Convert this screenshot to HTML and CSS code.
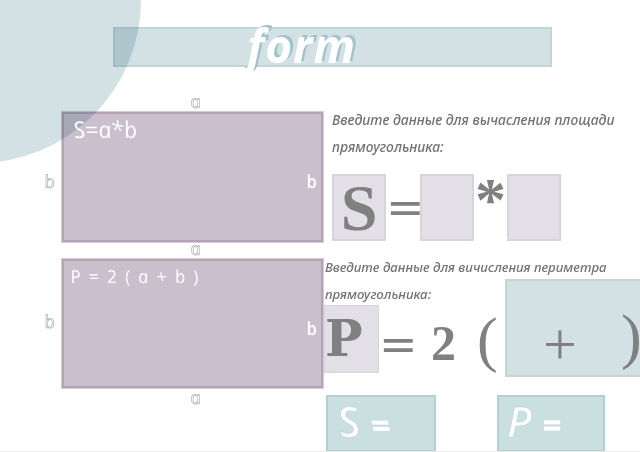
FILE: index.html
```html
<!DOCTYPE html>
<html lang="ru">
<head>
<meta charset="utf-8">
<title>form</title>
<link rel="stylesheet" href="styles.css">
</head>
<body>
<div class="page">
  <div class="circle"></div>
  <header class="banner"><h1 class="title">form</h1></header>
  <main class="main">
    <section class="figures">
      <div class="side-h side-top"><span class="upright">a</span></div>
      <div class="figure">
        <div class="side-left side-left-1"><span class="upright">b</span></div>
        <div class="rect">
          <div class="formula"><span class="upright">S=a*b</span></div>
          <div class="side-right"><span class="upright">b</span></div>
        </div>
      </div>
      <div class="side-h side-mid"><span class="upright">a</span></div>
      <div class="figure">
        <div class="side-left side-left-2"><span class="upright">b</span></div>
        <div class="rect rect-2">
          <div class="formula formula-wide"><span class="upright">P = 2 ( a + b )</span></div>
          <div class="side-right"><span class="upright">b</span></div>
        </div>
      </div>
      <div class="side-h side-bottom"><span class="upright">a</span></div>
    </section>
    <section class="forms">
      <div class="form-area">
        <p class="prompt">Введите данные для вычасления площади<br>прямоугольника:</p>
        <div class="eq-area">
          <div class="cell cell-s">S</div>
          <span class="sym eq-a">=</span>
          <div class="cell"></div>
          <span class="sym star">*</span>
          <div class="cell"></div>
        </div>
      </div>
      <div class="form-perim">
        <p class="prompt">Введите данные для вичисления периметра<br>прямоугольника:</p>
        <div class="eq-perim">
          <div class="cell cell-p">P</div>
          <span class="sym eq-p">=</span>
          <span class="sym two">2</span>
          <span class="sym paren">(</span>
          <div class="sum-box"><span class="sym plus">+</span><span class="sym paren close">)</span></div>
        </div>
      </div>
      <div class="results">
        <div class="result result-s"><span class="upright">S <span class="result-eq">=</span></span></div>
        <div class="result result-p">P <span class="result-eq">=</span></div>
      </div>
    </section>
  </main>
</div>
</body>
</html>
```
FILE: styles.css
```css
* { box-sizing: border-box; }
html, body { margin: 0; padding: 0; background: #fff; }
.page {
  position: relative;
  width: 640px;
  height: 452px;
  overflow: hidden;
  background: #fff;
  border-bottom: 1px solid #ebebeb;
  font-family: "Noto Sans", sans-serif;
}
.upright { display: inline-block; transform: skewX(12deg); }
.circle {
  position: absolute;
  left: -185px;
  top: -163px;
  width: 326px;
  height: 326px;
  border-radius: 50%;
  background: #d3e1e5;
}
.banner {
  position: relative;
  margin: 27px 88px 0 113px;
  height: 40px;
}
.banner::before {
  content: "";
  position: absolute;
  inset: 0;
  border: 2px solid #c2d6da;
  background: #d3e1e5;
  mix-blend-mode: multiply;
}
.title {
  position: absolute;
  left: 134px;
  top: -11px;
  margin: 0;
  color: #fff;
  font: italic 700 46px/58px "Open Sans", sans-serif;
  letter-spacing: 1px;
  text-shadow: 3px -2px 0 #a3c2ca;
}
.main {
  position: relative;
  display: grid;
  grid-template-columns: 324px 316px;
  margin-top: 27px;
}
.figures { display: flex; flex-direction: column; }
.figure { display: flex; align-items: center; }
.side-h, .side-left {
  color: #fff;
  -webkit-text-stroke: 0.6px #a9a9a9;
  font: italic 400 18px/15px "Open Sans", sans-serif;
  text-align: center;
}
.side-h { padding-left: 66px; }
.side-top { height: 17px; }
.side-mid { height: 15px; line-height: 11px; }
.side-bottom { height: 17px; padding-top: 1px; }
.side-left { width: 61px; padding-left: 37px; font-size: 18px; }
.side-left-1 { padding-top: 9px; }
.side-left-2 { padding-bottom: 4px; }
.rect {
  position: relative;
  width: 263px;
  height: 132px;
  flex: none;
}
.rect-2 { height: 131px; }
.rect::before {
  content: "";
  position: absolute;
  inset: 0;
  border: 3px solid #b3a3b5;
  outline: 1px solid #d4cbd7;
  outline-offset: -1px;
  background: #cabfcd;
  mix-blend-mode: multiply;
}
.formula, .side-right { color: #fff; position: relative; }
.formula {
  padding: 5px 0 0 12px;
  font: italic 500 23px/26px "Open Sans", sans-serif;
}
.formula-wide {
  padding: 5px 0 0 9px;
  font-size: 18px;
  letter-spacing: 1.7px;
}
.side-right {
  position: absolute;
  right: 7px;
  top: 60px;
  font: italic 600 18px/20px "Open Sans", sans-serif;
}
.forms { padding-top: 12px; min-width: 0; }
.form-area { padding-left: 8px; }
.form-perim { margin-top: 13px; padding-left: 1px; }
.prompt {
  margin: 0;
  white-space: nowrap;
  color: #727272;
  font: italic 500 13.9px/27px "Noto Sans", sans-serif;
}
.form-perim .prompt { font-size: 13.2px; }
.eq-area { display: flex; align-items: flex-start; margin-top: 14px; height: 67px; }
.cell {
  flex: none;
  width: 54px;
  height: 67px;
  border: 2px solid #d8d4dc;
  background: #e3dfe6;
}
.sym { flex: none; color: #808080; font-family: "Liberation Serif", serif; }
.cell-s, .cell-p {
  display: flex;
  align-items: center;
  justify-content: center;
  color: #808080;
}
.cell-s { font: 700 66px/60px "Liberation Serif", serif; }
.cell-p { font: 700 50px/60px "DejaVu Serif", serif; }
.eq-a {
  width: 34px;
  font: 400 46px/66px "DejaVu Sans", sans-serif;
  text-align: center;
}
.star {
  width: 33px;
  margin-top: -6px;
  font: 700 62px/62px "Liberation Serif", serif;
  text-align: center;
}
.eq-perim { display: flex; align-items: flex-start; margin-top: -3px; height: 68px; }
.cell-p { width: 55px; height: 68px; margin-left: -1px; border-width: 1px; justify-content: flex-start; }
.eq-p { width: 52px; font: 400 46px/78px "DejaVu Sans", sans-serif; }
.two { width: 46px; font: 700 50px/76px "Liberation Serif", serif; }
.paren { width: 28px; font-size: 62px; line-height: 68px; font-weight: 400; }
.sum-box {
  flex: none;
  display: flex;
  width: 150px;
  height: 98px;
  margin-top: -26px;
  padding-left: 36px;
  border: 2px solid #c2d6da;
  background: #d3e1e5;
}
.plus { width: 78px; font-size: 60px; line-height: 126px; }
.close { width: 20px; line-height: 110px; }
.results { display: flex; gap: 61px; margin: 22px 0 0 2px; }
.result {
  flex: none;
  height: 57px;
  padding-left: 10px;
  border: 2px solid #b3d0d2;
  background: #c9dfe0;
  color: #fff;
  font: italic 600 42px/48px "Open Sans", sans-serif;
  -webkit-text-stroke: 0.5px #b5cfd1;
}
.result-eq { font-size: 32px; -webkit-text-stroke: 1px #fff; }
.result-s { width: 110px; }
.result-p { width: 108px; padding-left: 8px; }
```
